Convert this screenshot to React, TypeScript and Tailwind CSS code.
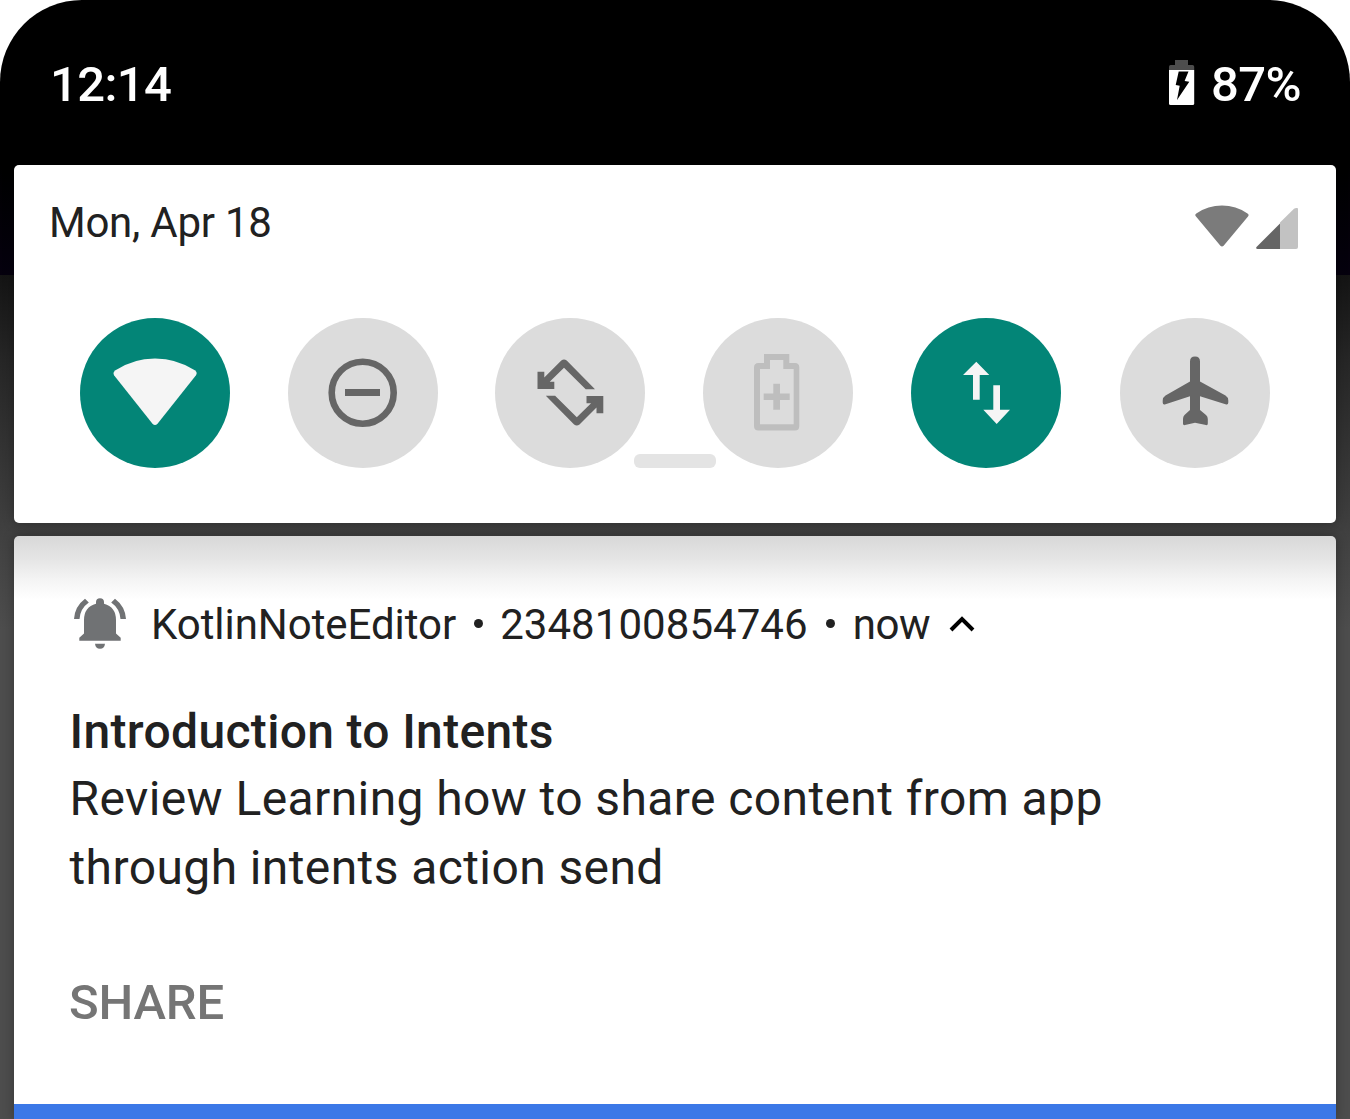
import React from "react";

function StatusBattery() {
  return (
    <svg width="26" height="45" viewBox="0 0 26 45">
      <path d="M6 0h13v5h4.500q1.700 0 1.700 1.700V10H0V6.700Q0 5 1.700 5H6z" fill="#4d4d4d" />
      <path d="M0 10h25.200v33.500q0 1.500-1.500 1.500H1.500Q0 45 0 43.500z" fill="#fff" />
      <path d="M9.700 11.500h9.800L15.600 21l4.700.8L8 40l2.700-14.300-4-.7z" fill="#000" />
    </svg>
  );
}

function SmallWifi() {
  return (
    <svg width="54" height="44" viewBox="0 0 54 44">
      <path d="M1 12.500Q-.6 10.700 1.300 9.400Q13 1.500 27 1.500T52.500 9.400Q54.400 10.700 53 12.500L28.600 41.800Q27 43.400 25.400 41.800z" fill="#7b7b7b" />
    </svg>
  );
}

function SmallSignal() {
  return (
    <svg className="mt-[2px]" width="43" height="44" viewBox="0 0 43 44">
      <path d="M24 16.500L38 2.800Q39 2 40.500 2h.6q.9 0 .9 1v38q0 2-2 2h-16z" fill="#c2c2c2" />
      <path d="M24 17.500V43H1.500Q-.5 43 .5 41z" fill="#656565" />
    </svg>
  );
}

const upper =
  "M42.500 53.700H49.300V59.500L66.300 42.600Q69 40.400 71.700 42.600L100 71.300H90.700L69 49.700L54.700 63.700H59.300V71H42.500Z";

const tiles = [
  {
    name: "Wi-Fi",
    box: "bg-[#038577] text-[#f5f5f5]",
    icon: (
      <path d="M34.200 57.500Q32.300 54.500 35.500 52.300Q53 40.400 75 40.400T114.800 52.300Q118 54.500 115.800 57.500L77.500 105.800Q75 108.400 72.500 105.800Z" />
    ),
  },
  {
    name: "Do Not Disturb",
    box: "ml-[58px] bg-[#dcdcdc] text-[#666666]",
    icon: (
      <>
        <circle cx="74.700" cy="74.700" r="31" fill="none" stroke="currentColor" strokeWidth="6.600" />
        <path d="M57 71h35v7H57z" />
      </>
    ),
  },
  {
    name: "Auto-rotate",
    box: "ml-[57px] bg-[#dcdcdc] text-[#666666]",
    icon: (
      <>
        <path d={upper} />
        <path d={upper} transform="rotate(180 75.400 74.500)" />
      </>
    ),
  },
  {
    name: "Battery Saver",
    box: "ml-[58px] bg-[#dcdcdc] text-[#bebebe]",
    icon: (
      <>
        <path
          fillRule="evenodd"
          d="M61 36H86.300V45H92Q96.300 45 96.300 49.500V108Q96.300 112.600 92 112.600H55.500Q51 112.600 51 108V49.500Q51 45 55.500 45H61ZM67 42V51H57V106.300H90.700V51H80.300V42Z"
        />
        <path d="M70.300 65.700H77V75.600H86.700V82H77V91.700H70.300V82H60.700V75.600H70.300Z" />
      </>
    ),
  },
  {
    name: "Mobile data",
    box: "ml-[58px] bg-[#038577] text-[#f5f5f5]",
    icon: (
      <path d="M65.300 43.700L78.300 57H68.700V81.700H62V57H52ZM82.300 67.300H89V91.700H99L85.700 106L72.300 91.700H82.300Z" />
    ),
  },
  {
    name: "Airplane mode",
    box: "ml-[59px] bg-[#dcdcdc] text-[#666666]",
    icon: (
      <path d="M70 43.500Q70 38.600 75 38.600T80 43.500V63.500L105.500 77.500Q108.300 79.300 108.300 82.500V84.500Q108.300 87.300 105.500 86.300L80 78.300V92L86 97Q87.800 98.700 87.800 101V105.500Q87.800 107.600 86 107.100L75 104.700L65 107.100Q63 107.600 63 105.500V101Q63 98.700 64.500 97L70 92V78.300L45.500 86.300Q42.700 87.300 42.700 84.500V82.500Q42.700 79.300 45.500 77.500L70 63.500Z" />
    ),
  },
];

function Bell() {
  return (
    <svg width="52" height="51" viewBox="0 0 52 51" fill="#707274">
      <path d="M22 5.700V4Q22 .2 26 .2T30 4V5.700Q42 9 42 22V35.500L46.700 39.800V42.700H5.300V39.800L10 35.500V22Q10 9 22 5.700Z" />
      <path d="M21 45.700H31Q30.500 50.800 26 50.800T21 45.700Z" />
      <path d="M0 21Q.8 8.500 11 .8L14.800 4.500Q6.200 10.500 5.500 21Z" />
      <path d="M52 21Q51.200 8.500 41 .8L37.200 4.500Q45.800 10.500 46.500 21Z" />
    </svg>
  );
}

export default function App() {
  return (
    <div className="h-[1119px] w-[1350px] overflow-hidden bg-white font-['Roboto',sans-serif]">
      <div className="flex h-full flex-col items-center overflow-hidden rounded-t-[82px] bg-[linear-gradient(to_bottom,#000_0px,#000_165px,#05000e_275px,#141414_275px,#262626_360px,#3b3b3b_500px,#424242_545px,#4d4d4d_630px,#4d4d4d_100%)]">
        <header className="flex h-[165px] w-full shrink-0 items-start justify-between pl-[50px] pr-[49px] pt-[60px] text-[49px] font-medium leading-[48px] tracking-[-0.6px] text-white">
          <span className="mt-px">12:14</span>
          <div className="flex items-start">
            <StatusBattery />
            <span className="ml-[16px] mt-px">87%</span>
          </div>
        </header>

        <section className="relative h-[358px] w-[1322px] shrink-0 rounded-[5px] bg-white shadow-[0_0_12px_rgba(0,0,0,0.3)]">
          <div className="flex h-[83px] items-start justify-between pl-[35px] pr-[37px]">
            <span className="mt-[34px] text-[42px] leading-[48px] tracking-[-0.25px] text-[#212121]">Mon, Apr 18</span>
            <div className="mt-[39px] flex items-start gap-[7px]">
              <SmallWifi />
              <SmallSignal />
            </div>
          </div>
          <div className="mt-[70px] flex pl-[66px]">
            {tiles.map((t) => (
              <button key={t.name} aria-label={t.name} className={`size-[150px] shrink-0 rounded-full ${t.box}`}>
                <svg width="150" height="150" viewBox="0 0 150 150" fill="currentColor">
                  {t.icon}
                </svg>
              </button>
            ))}
          </div>
          <div className="absolute left-[620px] top-[289px] h-[14px] w-[82px] rounded-[6px] bg-[#e4e4e4]" />
        </section>

        <section className="mt-[13px] flex h-[583px] w-[1322px] shrink-0 flex-col rounded-t-[5px] bg-[linear-gradient(to_bottom,#d8d8d8_0px,#e5e5e5_23px,#f5f5f5_45px,#fff_64px)] text-[#212121] shadow-[0_0_12px_rgba(0,0,0,0.3)]">
          <div className="flex h-[116px] items-start pl-[60px] pt-[62px] text-[42px] leading-[54px]">
            <Bell />
            <span className="ml-[25px] tracking-[-0.05px]">KotlinNoteEditor</span>
            <span className="ml-[18px] mt-[21px] size-[9px] rounded-full bg-[#212121]" />
            <span className="ml-[17px] tracking-[0.05px]">2348100854746</span>
            <span className="ml-[18px] mt-[21px] size-[9px] rounded-full bg-[#212121]" />
            <span className="ml-[18px] tracking-[-0.4px]">now</span>
            <svg className="ml-[19px] mt-[17px]" width="26" height="18" viewBox="0 0 26 18">
              <path d="M2 15L13 4L24 15" fill="none" stroke="#000" strokeWidth="4" />
            </svg>
          </div>
          <h1 className="mt-[46px] h-[66px] pl-[55.500px] text-[48px] font-medium leading-[68px] tracking-[0.33px]">
            Introduction to Intents
          </h1>
          <p className="pl-[55.500px] text-[48px] leading-[69px] tracking-[0.4px]">
            Review Learning how to share content from app
            <br />
            through intents action send
          </p>
          <button className="ml-[55px] mt-[67px] self-start text-[49px] font-medium leading-[68px] tracking-[-0.2px] text-[#757575]">SHARE</button>
          <div className="mt-auto h-[15px] bg-[#3b78e7]" />
        </section>
      </div>
    </div>
  );
}
